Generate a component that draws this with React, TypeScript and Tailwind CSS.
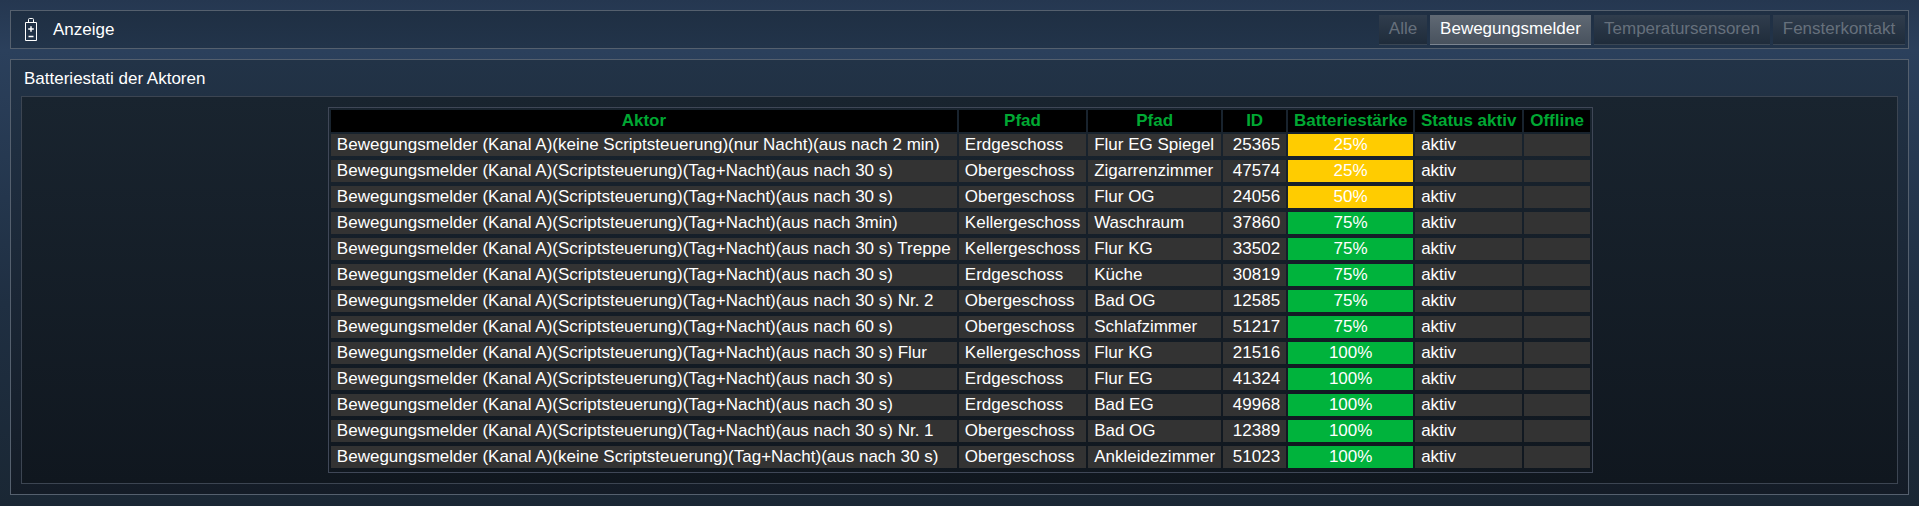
const rows = [
  ["Bewegungsmelder (Kanal A)(keine Scriptsteuerung)(nur Nacht)(aus nach 2 min)", "Erdgeschoss", "Flur EG Spiegel", "25365", 25],
  ["Bewegungsmelder (Kanal A)(Scriptsteuerung)(Tag+Nacht)(aus nach 30 s)", "Obergeschoss", "Zigarrenzimmer", "47574", 25],
  ["Bewegungsmelder (Kanal A)(Scriptsteuerung)(Tag+Nacht)(aus nach 30 s)", "Obergeschoss", "Flur OG", "24056", 50],
  ["Bewegungsmelder (Kanal A)(Scriptsteuerung)(Tag+Nacht)(aus nach 3min)", "Kellergeschoss", "Waschraum", "37860", 75],
  ["Bewegungsmelder (Kanal A)(Scriptsteuerung)(Tag+Nacht)(aus nach 30 s) Treppe", "Kellergeschoss", "Flur KG", "33502", 75],
  ["Bewegungsmelder (Kanal A)(Scriptsteuerung)(Tag+Nacht)(aus nach 30 s)", "Erdgeschoss", "Küche", "30819", 75],
  ["Bewegungsmelder (Kanal A)(Scriptsteuerung)(Tag+Nacht)(aus nach 30 s) Nr. 2", "Obergeschoss", "Bad OG", "12585", 75],
  ["Bewegungsmelder (Kanal A)(Scriptsteuerung)(Tag+Nacht)(aus nach 60 s)", "Obergeschoss", "Schlafzimmer", "51217", 75],
  ["Bewegungsmelder (Kanal A)(Scriptsteuerung)(Tag+Nacht)(aus nach 30 s) Flur", "Kellergeschoss", "Flur KG", "21516", 100],
  ["Bewegungsmelder (Kanal A)(Scriptsteuerung)(Tag+Nacht)(aus nach 30 s)", "Erdgeschoss", "Flur EG", "41324", 100],
  ["Bewegungsmelder (Kanal A)(Scriptsteuerung)(Tag+Nacht)(aus nach 30 s)", "Erdgeschoss", "Bad EG", "49968", 100],
  ["Bewegungsmelder (Kanal A)(Scriptsteuerung)(Tag+Nacht)(aus nach 30 s) Nr. 1", "Obergeschoss", "Bad OG", "12389", 100],
  ["Bewegungsmelder (Kanal A)(keine Scriptsteuerung)(Tag+Nacht)(aus nach 30 s)", "Obergeschoss", "Ankleidezimmer", "51023", 100],
] as const;

const headers = [
  { label: "Aktor", width: "w-[626px]" },
  { label: "Pfad", width: "w-[127px]" },
  { label: "Pfad", width: "w-[133px]" },
  { label: "ID", width: "w-[63px]" },
  { label: "Batteriestärke", width: "w-[125px]" },
  { label: "Status aktiv", width: "w-[107px]" },
  { label: "Offline", width: "w-[66px]" },
];

const tabs = [
  { label: "Alle", width: "w-[48px]" },
  { label: "Bewegungsmelder", width: "w-[161px]" },
  { label: "Temperatursensoren", width: "w-[176px]" },
  { label: "Fensterkontakt", width: "w-[132px]" },
];

const cell = "h-6 border-b-2 border-transparent bg-[#333333] bg-clip-padding px-[6px] py-0 whitespace-nowrap";

function BatteryIcon() {
  return (
    <svg width="12" height="23" viewBox="0 0 12 23" fill="none" stroke="#ffffff" strokeWidth="1">
      <path d="M.5 4.5h11v18H.5z" />
      <path d="M3.5 4V1.5q0-1 1-1h3q1 0 1 1V4" />
      <path d="M6 8.2v5.6M3.2 11h5.6M3.5 18.5h5" strokeWidth="1.5" />
    </svg>
  );
}

export default function App() {
  return (
    <div className="flex h-screen flex-col gap-[10px] bg-[linear-gradient(180deg,#253750_0%,#2b405c_10%,#1f2f42_60%,#1a2734_100%)] px-[10px] pt-[10px] pb-[11px] font-['Liberation_Sans',Arial,sans-serif] text-[17px] leading-[20px] text-white">
      <div className="flex h-[39px] items-center justify-between border border-[#55606e] bg-linear-to-b from-[#1f2f43] to-[#22344a] pr-[3px] pl-[14px]">
        <div className="flex items-center gap-[16px]">
          <BatteryIcon />
          <span>Anzeige</span>
        </div>
        <div className="flex gap-[3px]">
          {tabs.map((tab) =>
            tab.label === "Bewegungsmelder" ? (
              <div key={tab.label} className={tab.width + " flex h-[30px] items-center justify-center border-b border-[#7b8490] bg-linear-to-b from-[#606974] to-[#48525e] text-white"}>
                {tab.label}
              </div>
            ) : (
              <div key={tab.label} className={tab.width + " flex h-[30px] items-center justify-center border-b border-[#3a4654] bg-linear-to-b from-[#303d4d] to-[#1f2c3b] text-[#66707c]"}>
                {tab.label}
              </div>
            ),
          )}
        </div>
      </div>

      <div className="flex min-h-0 flex-1 flex-col border border-[#55606e] bg-linear-to-b from-[#223347] to-[#141c27] px-[10px] pb-[10px]">
        <div className="flex h-[36px] items-center pt-[2px] pl-[3px]">Batteriestati der Aktoren</div>
        <div className="flex-1 border border-[#3c4552] bg-linear-to-b from-[#19242f] to-[#10171f] pt-[10px] pl-[2px]">
          <table className="mx-auto table-fixed border-separate border-spacing-[2px] border border-[#3f4757] text-white">
            <thead>
              <tr>
                {headers.map((h, i) => (
                  <th key={i} className={h.width + " h-[22px] bg-black p-0 text-center font-bold whitespace-nowrap text-[#00a833]"}>
                    {h.label}
                  </th>
                ))}
              </tr>
            </thead>
            <tbody>
              {rows.map((r) => (
                <tr key={r[3]}>
                  <td className={cell}>{r[0]}</td>
                  <td className={cell}>{r[1]}</td>
                  <td className={cell}>{r[2]}</td>
                  <td className={cell + " text-right"}>{r[3]}</td>
                  <td className={r[4] < 75 ? "h-6 border-b-2 border-transparent bg-[#ffcc00] bg-clip-padding py-0 text-center" : "h-6 border-b-2 border-transparent bg-[#00b33c] bg-clip-padding py-0 text-center"}>
                    {r[4]}%
                  </td>
                  <td className={cell}>aktiv</td>
                  <td className={cell}></td>
                </tr>
              ))}
            </tbody>
          </table>
        </div>
      </div>
    </div>
  );
}
